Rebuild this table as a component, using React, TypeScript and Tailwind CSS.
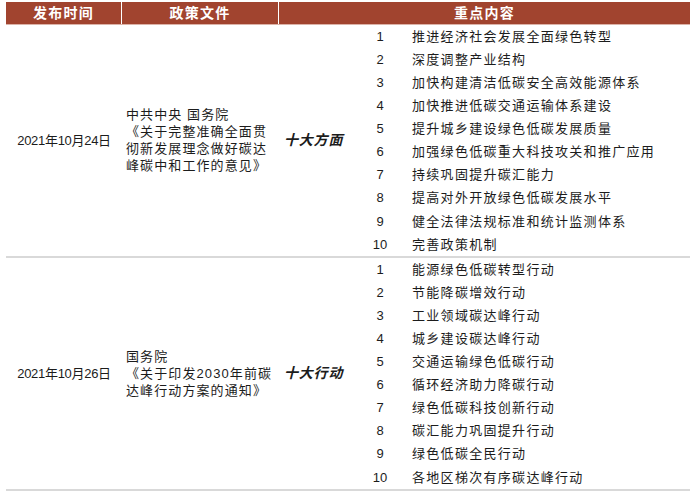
import React from "react";

const blocks = [
  {
    date: "2021年10月24日",
    doc: ["中共中央 国务院", "《关于完整准确全面贯", "彻新发展理念做好碳达", "峰碳中和工作的意见》"],
    tag: "十大方面",
    items: [
      "推进经济社会发展全面绿色转型",
      "深度调整产业结构",
      "加快构建清洁低碳安全高效能源体系",
      "加快推进低碳交通运输体系建设",
      "提升城乡建设绿色低碳发展质量",
      "加强绿色低碳重大科技攻关和推广应用",
      "持续巩固提升碳汇能力",
      "提高对外开放绿色低碳发展水平",
      "健全法律法规标准和统计监测体系",
      "完善政策机制",
    ],
  },
  {
    date: "2021年10月26日",
    doc: ["国务院", "《关于印发2030年前碳", "达峰行动方案的通知》"],
    tag: "十大行动",
    items: [
      "能源绿色低碳转型行动",
      "节能降碳增效行动",
      "工业领域碳达峰行动",
      "城乡建设碳达峰行动",
      "交通运输绿色低碳行动",
      "循环经济助力降碳行动",
      "绿色低碳科技创新行动",
      "碳汇能力巩固提升行动",
      "绿色低碳全民行动",
      "各地区梯次有序碳达峰行动",
    ],
  },
];

export default function App() {
  return (
    <div
      className="w-[700px] h-[497px] bg-white pl-[6px] pr-[10px] pt-[2px] text-[#1c1c1c]"
      style={{ fontFamily: '"Liberation Sans", "Noto Sans CJK SC", sans-serif' }}
    >
      <div className="w-[684px]">
        <div className="flex h-[23px] bg-[#a1442f] border-b border-[#dcb3a8] text-white font-bold text-[14px] tracking-[1.2px]">
          <div className="w-[116px] flex items-center justify-center border-r border-white">发布时间</div>
          <div className="w-[157px] flex items-center justify-center border-r border-white">政策文件</div>
          <div className="flex-1 flex items-center justify-center">重点内容</div>
        </div>
        {blocks.map((b, i) => (
          <div key={i} className="flex border-b-2 border-[#d9d9d9]">
            <div className="w-[116px] flex items-center justify-center text-[13px] tracking-[-0.3px]">{b.date}</div>
            <div className="w-[157px] flex flex-col justify-center pl-[4px] text-[13px] leading-[17px] tracking-[1.1px]">
              {b.doc.map((l, j) => (
                <div key={j}>{l}</div>
              ))}
            </div>
            <div className="w-[80px] flex items-center pl-[5px] text-[14px] font-bold italic tracking-[0.8px]">{b.tag}</div>
            <div className="flex-1 flex flex-col">
              {b.items.map((it, k) => (
                <div key={k} className="flex h-[23.1px] items-center">
                  <div className="w-[42px] text-center text-[13px]">{k + 1}</div>
                  <div className="pl-[11px] text-[13px] tracking-[1.3px]">{it}</div>
                </div>
              ))}
            </div>
          </div>
        ))}
      </div>
    </div>
  );
}
